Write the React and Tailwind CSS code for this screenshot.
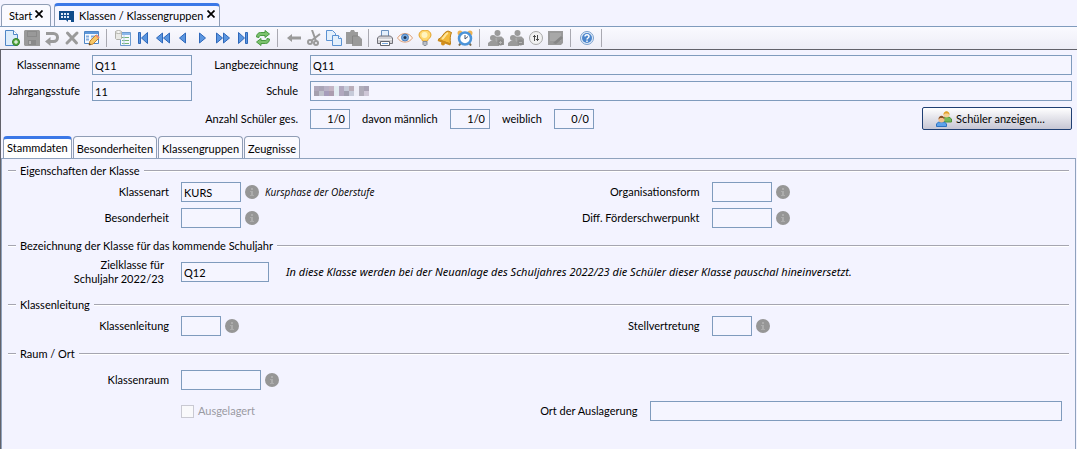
import { useState } from "react";

function Icon({ children }) {
  return (
    <svg viewBox="0 0 16 16" className="w-4 h-4 shrink-0" fill="none" aria-hidden="true">
      {children}
    </svg>
  );
}

const GRAY = "#9a9a9a";
const BLUE = "#5b96e0";
const EDGE = "#2f68ba";

function People({ badge }) {
  return (
    <Icon>
      <g fill={GRAY}>
        <circle cx="9.500" cy="3" r="3" />
        <path d="M5 6.500h8.500L16 9v6H5z" />
        <circle cx="5" cy="8" r="3" />
        <path d="M0 16v-3l2.500-2h5.500l3 2v3z" />
      </g>
      <path d="M8 8c.5 2-.5 3 1 3.500" stroke="#b5b5b5" />
      <circle cx="12.500" cy="12.500" r="3" fill="#8c8c8c" />
      <path d={badge} stroke="#b5b5b5" />
    </Icon>
  );
}

const icons = {
  neu: (
    <Icon>
      <path d="M1.500.5h8l4 4v11h-12z" fill="#dcecfb" stroke="#4f86c6" />
      <path d="M9.500.5v4h4" fill="#fff" stroke="#4f86c6" />
      <circle cx="12" cy="12" r="3.500" fill="#5cae47" stroke="#2f7d25" />
      <path d="M12 10v4M10 12h4" stroke="#fff" />
    </Icon>
  ),
  speichern: (
    <Icon>
      <path d="M1 0h14l1 1v15H1L0 15V1z" fill={GRAY} />
      <path d="M3 1h10v6H3zM4 10h8v5H4z" fill="#8a8a8a" />
      <path d="M4 3h8M4 5h8" stroke="#a8a8a8" />
      <path d="M5 11h2v3H5z" fill="#b5b5b5" />
    </Icon>
  ),
  rueckgaengig: (
    <Icon>
      <path d="M2 3.500h7.500a3.500 3.500 0 0 1 0 8H5" stroke={GRAY} strokeWidth="3" />
      <path d="M6.500 7v9L1 11.500z" fill={GRAY} />
    </Icon>
  ),
  loeschen: (
    <Icon>
      <path d="M3.500 3l9 10M13 3L3 13" stroke={GRAY} strokeWidth="3" strokeLinecap="round" />
    </Icon>
  ),
  bearbeiten: (
    <Icon>
      <path d="M.5 1.500h14v12H.5z" fill="#f4f9ff" stroke="#4f86c6" />
      <path d="M1 2h13v2H1z" fill="#5d97da" />
      <path d="M2 6.500h3M7 6.500h6M2 9.500h3M7 9.500h3" stroke="#86aee0" strokeWidth="2" />
      <path d="M5 15l1-4 6-6 3 3-6 6z" fill="#f8c868" stroke="#c28330" />
      <path d="M5 15l.5-2 1.500 1.500z" fill="#333" />
      <path d="M12 5l3 3" stroke="#e88d75" strokeWidth="2" />
    </Icon>
  ),
  tabelle: (
    <Icon>
      <path d="M5.500 2.500h10v13h-10z" fill="#f4f9ff" stroke="#6c9bd0" />
      <path d="M6 3h9v2H6z" fill="#8cb8ea" />
      <path d="M7 7.500h7M7 10.500h7M7 13.500h7" stroke="#78b478" />
      <path d="M9 5v10" stroke="#b5cfec" />
      <path d="M.5 1.500h6v7l-1 1h-4l-1-1z" fill="#e9e9e5" stroke="#b0b0aa" />
      <ellipse cx="3.500" cy="2" rx="3" ry="1.500" fill="#f7f7f5" stroke="#b0b0aa" />
    </Icon>
  ),
  erster: (
    <Icon>
      <path d="M3.500 2.500h2v11h-2zM12.500 2.500v11L6.500 8z" fill={BLUE} stroke={EDGE} />
    </Icon>
  ),
  zurueckSchnell: (
    <Icon>
      <path d="M7.500 3v10L1.500 8zM14.500 3v10l-6-5z" fill={BLUE} stroke={EDGE} />
    </Icon>
  ),
  zurueck: (
    <Icon>
      <path d="M10.500 3v10L4.500 8z" fill={BLUE} stroke={EDGE} />
    </Icon>
  ),
  vor: (
    <Icon>
      <path d="M4.500 3v10l6-5z" fill={BLUE} stroke={EDGE} />
    </Icon>
  ),
  vorSchnell: (
    <Icon>
      <path d="M1.500 3v10l6-5zM8.500 3v10l6-5z" fill={BLUE} stroke={EDGE} />
    </Icon>
  ),
  letzter: (
    <Icon>
      <path d="M3.500 2.500v11l6-5.500zM10.500 2.500h2v11h-2z" fill={BLUE} stroke={EDGE} />
    </Icon>
  ),
  aktualisieren: (
    <Icon>
      <path d="M1.500 7c0-3 2-4.500 4-4.500h4.500V.5L14.500 4 10 7.500v-2H6C4.500 5.500 4 6 4 7.500z" fill="#7cc26d" stroke="#4a9a42" />
      <path d="M14.500 9c0 3-2 4.500-4 4.500H6v2L1.500 12 6 8.500v2h4c1.500 0 2-.5 2-2z" fill="#7cc26d" stroke="#4a9a42" />
    </Icon>
  ),
  pfeil: (
    <Icon>
      <path d="M1 8l5-4v2.500h9v3H6V12z" fill={GRAY} />
    </Icon>
  ),
  ausschneiden: (
    <Icon>
      <path d="M6 0l4 11M14 4L5 11" stroke={GRAY} strokeWidth="2" />
      <circle cx="4" cy="12" r="2" stroke={GRAY} strokeWidth="2" />
      <circle cx="10" cy="13" r="2" stroke={GRAY} strokeWidth="2" />
    </Icon>
  ),
  kopieren: (
    <Icon>
      <path d="M.5.5h6l3 3v7h-9z" fill="#e4f0fc" stroke="#5b92d2" />
      <path d="M6.500 5.500h6l3 3v7h-9z" fill="#e4f0fc" stroke="#5b92d2" />
      <path d="M12.500 5.500v3h3" fill="#fff" stroke="#5b92d2" />
    </Icon>
  ),
  einfuegen: (
    <Icon>
      <path d="M0 2h4l1-2h3l1 2h3v4h1l3 3v7H6v-2H0z" fill={GRAY} />
      <path d="M6.500 14V6H12" stroke="#858585" />
    </Icon>
  ),
  drucken: (
    <Icon>
      <path d="M4.500 7V.5h7V7" fill="#e4f0fc" stroke="#6d93bf" />
      <path d="M.5 8l2-2h11l2 2v5.500H.5z" fill="#d2d2d6" stroke="#707078" />
      <path d="M1 9.500h14" stroke="#f3f3f3" />
      <path d="M3.500 11.500h9v4h-9z" fill="#fff" stroke="#62676f" />
      <path d="M5 13.500h6" stroke="#78a9df" />
    </Icon>
  ),
  ansicht: (
    <Icon>
      <path d="M.5 8C4 2 12 2 15.500 8 12 13.500 4 13.500.5 8z" fill="#fff6ee" stroke="#dba27f" />
      <circle cx="8" cy="7.500" r="3.500" fill="#75a9e0" stroke="#4a7fc0" />
      <circle cx="8" cy="7.500" r="1.500" fill="#1f3350" />
    </Icon>
  ),
  tipp: (
    <Icon>
      <path d="M5.500 11c0-2-3.500-3-3.500-6A6 5 0 0 1 14 5c0 3-3.500 4-3.500 6z" fill="#ffd970" stroke="#e2a32e" />
      <circle cx="7.500" cy="5" r="3" fill="#fff4bf" />
      <path d="M6 11.500h4v3l-1 1H7l-1-1z" fill="#b9bec6" stroke="#858b95" />
    </Icon>
  ),
  glocke: (
    <Icon>
      <path d="M1 9.500C6 8 6 2 11 1l3.500 1.500C13 6 13 9 13.500 14z" fill="#f3b93b" stroke="#b87a14" />
      <path d="M5 9c3-2 3-5 6-6" stroke="#ffe69a" strokeWidth="2" />
      <path d="M1 10l12.500 4.500" stroke="#c98a1d" strokeWidth="2" />
      <circle cx="6" cy="13.500" r="2" fill="#d38f1c" />
    </Icon>
  ),
  wecker: (
    <Icon>
      <path d="M3.500 13.500L2 15.500M12.500 13.500l1.500 2" stroke="#7a6a4c" strokeWidth="2" />
      <circle cx="3" cy="3" r="2.500" fill="#edb253" />
      <circle cx="13" cy="3" r="2.500" fill="#edb253" />
      <circle cx="8" cy="8.500" r="6" fill="#fff" stroke="#4b93d8" strokeWidth="2.500" />
      <path d="M8 5v4l3-2.500" stroke="#44546b" />
    </Icon>
  ),
  personPlus: <People badge="M12.500 11v3M11 12.500h3" />,
  personMinus: <People badge="M11 12.500h3" />,
  filter: (
    <Icon>
      <circle cx="8" cy="8" r="6.500" fill="#f1f1f1" stroke="#a9a9a9" />
      <path d="M6.500 5v6M9.500 5v6" stroke="#4b4b4b" />
      <path d="M5 6.500h3M8 9.500h3" stroke="#4b4b4b" />
    </Icon>
  ),
  notiz: (
    <Icon>
      <path d="M0 1h15v12l-2 2H0z" fill={GRAY} />
      <path d="M2 3h11v8H2z" fill="#a8a8a8" />
      <path d="M5 13l8-7 2 2-7 6z" fill="#868686" />
    </Icon>
  ),
  hilfe: (
    <Icon>
      <circle cx="8" cy="8" r="6.500" fill="#e4eefa" stroke="#7ba0cc" />
      <circle cx="8" cy="8" r="5" fill="#4c86cc" />
      <path d="M6 6.500c0-2.500 4-2.500 4 0 0 1.500-2 1.500-2 3M8 10.500V12" stroke="#fff" strokeWidth="1.500" />
    </Icon>
  ),
};

const toolbar = [
  [["neu", "Neu"], ["speichern", "Speichern"], ["rueckgaengig", "Rückgängig"], ["loeschen", "Löschen"], ["bearbeiten", "Bearbeiten"]],
  [["tabelle", "Tabelle"], ["erster", "Erster"], ["zurueckSchnell", "Schnell zurück"], ["zurueck", "Zurück"], ["vor", "Vor"], ["vorSchnell", "Schnell vor"], ["letzter", "Letzter"], ["aktualisieren", "Aktualisieren"]],
  [["pfeil", "Übernehmen"], ["ausschneiden", "Ausschneiden"], ["kopieren", "Kopieren"], ["einfuegen", "Einfügen"]],
  [["drucken", "Drucken"], ["ansicht", "Ansicht"], ["tipp", "Tipp"], ["glocke", "Erinnerung"], ["wecker", "Wecker"]],
  [["personPlus", "Person hinzufügen"], ["personMinus", "Person entfernen"], ["filter", "Filter"], ["notiz", "Notiz"]],
  [["hilfe", "Hilfe"]],
];

const tabs = ["Stammdaten", "Besonderheiten", "Klassengruppen", "Zeugnisse"];

function Toolbar() {
  return (
    <div className="flex items-center h-[23px] pl-0.5 border-t border-[#7f9bbd] bg-gradient-to-b from-[#fafaff] to-[#ededf6]">
      {toolbar.map((group, i) => (
        <div key={i} className="flex items-center">
          {group.map(([name, label]) => (
            <button key={name} type="button" aria-label={label} className="flex justify-center w-5">
              {icons[name]}
            </button>
          ))}
          <span className="w-px h-[18px] ml-1 mr-1.5 bg-[#a9a9b1]" />
        </div>
      ))}
    </div>
  );
}

function Close({ label }) {
  return (
    <button type="button" aria-label={label}>
      <svg viewBox="0 0 8 8" className="w-2 h-2 mb-1" aria-hidden="true">
        <path d="M.5.5l7 7M7.500.5l-7 7" stroke="#000" strokeWidth="1.700" />
      </svg>
    </button>
  );
}

function Input({ id, value = "", className = "" }) {
  return (
    <input
      id={id}
      readOnly
      value={value}
      className={`h-5 px-0.5 border border-[#7f9bbd] bg-[#f5f5ff] outline-none ${className}`}
    />
  );
}

function Info() {
  return (
    <button type="button" aria-label="Info" className="ml-1 shrink-0">
      <svg viewBox="0 0 14 14" className="w-3.5 h-3.5" aria-hidden="true">
        <circle cx="7" cy="7" r="7" fill="#969696" />
        <path d="M6 3h2v2H6zM5 6h3v4h1v1H5v-1h1V7H5z" fill="#acacac" />
      </svg>
    </button>
  );
}

function Field({ id, label, value, width, children }) {
  return (
    <div className="flex items-center h-5">
      <label htmlFor={id} className="w-[161px] mr-3 text-right shrink-0">
        {label}
      </label>
      <Input id={id} value={value} className={width} />
      <Info />
      {children}
    </div>
  );
}

function Section({ title, children }) {
  return (
    <section>
      <h2 className="flex items-center h-4">
        <span className="w-2 h-0.5 border-t border-[#a5a5b0] bg-white" />
        <span className="mx-1">{title}</span>
        <span className="flex-1 h-0.5 border-t border-[#a5a5b0] bg-white" />
      </h2>
      {children}
    </section>
  );
}

// redacted school name
function Mosaic() {
  const cells = [
    ["#b0a8bb", "#aaa5b7", "#b9b2c6", "#c3b4c4"],
    ["#a5a0ae", "#bfc2cc", "#a69cbb", "#ab9daf"],
  ];
  return (
    <svg viewBox="0 0 56 10" className="absolute left-1 top-[5px] w-14 h-2.5" aria-hidden="true">
      {cells.map((row, y) =>
        row.map((fill, x) => <rect key={`${x}-${y}`} x={x * 5} y={y * 5} width="5" height="5" fill={fill} />)
      )}
      <path d="M20 0h5v10h-5z" fill="#e2ecf2" />
      <path d="M25 0h5v10h-5z" fill="#b1a8bf" />
      <path d="M30 0h5v5h-5zM35 5h5v5h-5z" fill="#c6cad9" />
      <path d="M30 5h5v5h-5z" fill="#a09fb0" />
      <path d="M35 0h5v5h-5z" fill="#b9adb9" />
      <path d="M40 0h5v10h-5z" fill="#eeeef8" />
      <path d="M45 0h5v10h-5z" fill="#b0adba" />
      <path d="M50 0h5v5h-5z" fill="#a9a3b5" />
      <path d="M50 5h5v5h-5z" fill="#cfc8d8" />
    </svg>
  );
}

export default function App() {
  const [active, setActive] = useState("Stammdaten");

  return (
    <div className="flex flex-col min-h-screen bg-[#f3f3ff] text-black text-[11px] leading-[14px] font-['Lato','Open_Sans',sans-serif]">
      <nav className="flex items-end gap-[3px] h-[26px] pl-px">
        <div className="flex items-center gap-[3px] h-[22px] px-[7px] border border-b-0 border-[#8f9db5] rounded-t-sm bg-[#fafaff]">
          <button type="button">Start</button>
          <Close label="Start schließen" />
        </div>
        <div className="flex items-center h-[23px] px-1 border-x border-t-[3px] border-x-[#8f9db5] border-t-[#3b78e7] rounded-t-sm bg-[#f6f6ff]">
          <svg viewBox="0 0 15 11" className="w-[15px] h-[11px] mr-[5px]" aria-hidden="true">
            <path d="M0 0h15v11h-3V9H9v2L7 9H0z" fill="#0f4c8a" />
            <path d="M2 2h2v2H2zM5 2h2v2H5zM8 2h2v2H8zM2 5h2v2H2zM5 5h2v2H5zM8 5h2v2H8z" fill="#dbe8f7" />
          </svg>
          <button type="button" className="mr-1">Klassen / Klassengruppen</button>
          <Close label="Klassen schließen" />
        </div>
      </nav>
      <Toolbar />

      <main className="flex flex-col flex-1 border-t border-l border-[#62626a]">
        <div className="flex flex-col gap-1.5 pt-[5px] pr-[5px]">
          <div className="flex items-center h-5">
            <label htmlFor="klassenname" className="w-[79px] mr-3 text-right">Klassenname</label>
            <Input id="klassenname" value="Q11" className="w-[100px]" />
            <label htmlFor="langbezeichnung" className="w-[106px] mr-3 text-right">Langbezeichnung</label>
            <Input id="langbezeichnung" value="Q11" className="flex-1" />
          </div>
          <div className="flex items-center h-5">
            <label htmlFor="jahrgangsstufe" className="w-[79px] mr-3 text-right">Jahrgangsstufe</label>
            <Input id="jahrgangsstufe" value="11" className="w-[100px]" />
            <label htmlFor="schule" className="w-[106px] mr-3 text-right">Schule</label>
            <div className="relative flex flex-1">
              <Input id="schule" className="w-full" />
              <Mosaic />
            </div>
          </div>
          <div className="flex items-center h-[23px] whitespace-nowrap">
            <label htmlFor="gesamt" className="w-[297px] mr-3 text-right">Anzahl Schüler ges.</label>
            <Input id="gesamt" value="1/0" className="w-10 pr-1 text-right" />
            <label htmlFor="maennlich" className="w-[76px] mx-3">davon männlich</label>
            <Input id="maennlich" value="1/0" className="w-10 pr-1 text-right" />
            <label htmlFor="weiblich" className="w-10 mx-3">weiblich</label>
            <Input id="weiblich" value="0/0" className="w-10 pr-1 text-right" />
            <button
              type="button"
              className="flex items-center gap-1 w-[150px] h-[23px] ml-auto pl-[13px] border border-[#1f3f73] rounded-xs bg-gradient-to-b from-white to-[#c6c6d4]"
            >
              <Icon>
                <path d="M6 10V8l2-2h5l2.500 2v3H9z" fill="#74b85a" stroke="#4e9138" />
                <circle cx="10.500" cy="3.500" r="3" fill="#f6cf94" />
                <path d="M7.500 4c0-5 6-5 6 0L12 2.500H9z" fill="#e0a128" />
                <path d="M.5 15.500V13l2-2h6l2 2v2.500z" fill="#5da2ea" stroke="#2f72c0" />
                <circle cx="5.500" cy="8.500" r="3" fill="#f1c08c" />
                <path d="M2.500 8.500c0-5 6-5 6 0L7 7H4z" fill="#8a5126" />
              </Icon>
              Schüler anzeigen...
            </button>
          </div>
        </div>

        <div role="tablist" className="flex items-end gap-px h-[22px] mt-1.5 pl-0.5">
          {tabs.map((tab) => (
            <button
              key={tab}
              type="button"
              role="tab"
              aria-selected={tab === active}
              onClick={() => setActive(tab)}
              className={
                tab === active
                  ? "h-[22px] px-[3px] pb-0.5 border-x border-t-[3px] border-x-[#8f9db5] border-t-[#3b78e7] rounded-t-sm bg-white"
                  : "h-[22px] px-[3px] pt-0.5 border border-b-0 border-[#8f9db5] rounded-t-sm bg-[#fafaff]"
              }
            >
              {tab}
            </button>
          ))}
        </div>

        <div className="flex-1 mr-px pt-1 px-1.5 border border-b-0 border-[#8fa2bd]">
          <Section title="Eigenschaften der Klasse">
            <div className="grid grid-cols-2 gap-y-1.5 pt-[3px] pb-[10px]">
              <Field id="klassenart" label="Klassenart" value="KURS" width="w-[60px]">
                <span className="ml-1.5 text-[10px] italic whitespace-nowrap font-['Open_Sans','Noto_Sans',sans-serif]">
                  Kursphase der Oberstufe
                </span>
              </Field>
              <Field id="organisationsform" label="Organisationsform" width="w-[60px]" />
              <Field id="besonderheit" label="Besonderheit" width="w-[60px]" />
              <Field id="foerderschwerpunkt" label="Diff. Förderschwerpunkt" width="w-[60px]" />
            </div>
          </Section>

          <Section title="Bezeichnung der Klasse für das kommende Schuljahr">
            <div className="flex items-center pt-1 pb-[11px]">
              <label htmlFor="zielklasse" className="w-[156px] mr-[17px] text-right">
                Zielklasse für
                <br />
                Schuljahr 2022/23
              </label>
              <Input id="zielklasse" value="Q12" className="w-[88px]" />
              <p className="ml-[17px] italic font-['Noto_Sans','Open_Sans',sans-serif]">
                In diese Klasse werden bei der Neuanlage des Schuljahres 2022/23 die Schüler dieser Klasse pauschal hineinversetzt.
              </p>
            </div>
          </Section>

          <Section title="Klassenleitung">
            <div className="grid grid-cols-2 pt-[3px] pb-[10px]">
              <Field id="klassenleitung" label="Klassenleitung" width="w-10" />
              <Field id="stellvertretung" label="Stellvertretung" width="w-10" />
            </div>
          </Section>

          <Section title="Raum / Ort">
            <div className="grid grid-cols-2 gap-y-[11px] pt-2">
              <Field id="klassenraum" label="Klassenraum" width="w-20" />
              <div />
              <label className="flex items-center gap-1 h-5 pl-[173px] text-[#9a9aa2]">
                <input
                  type="checkbox"
                  disabled
                  className="appearance-none w-[13px] h-[13px] border border-[#c9c9d2] bg-[#f9f9fb]"
                />
                Ausgelagert
              </label>
              <div className="flex items-center h-5 pr-[7px]">
                <label htmlFor="auslagerung" className="w-[99px] mr-3 text-right whitespace-nowrap">Ort der Auslagerung</label>
                <Input id="auslagerung" className="flex-1" />
              </div>
            </div>
          </Section>
        </div>
      </main>
    </div>
  );
}
